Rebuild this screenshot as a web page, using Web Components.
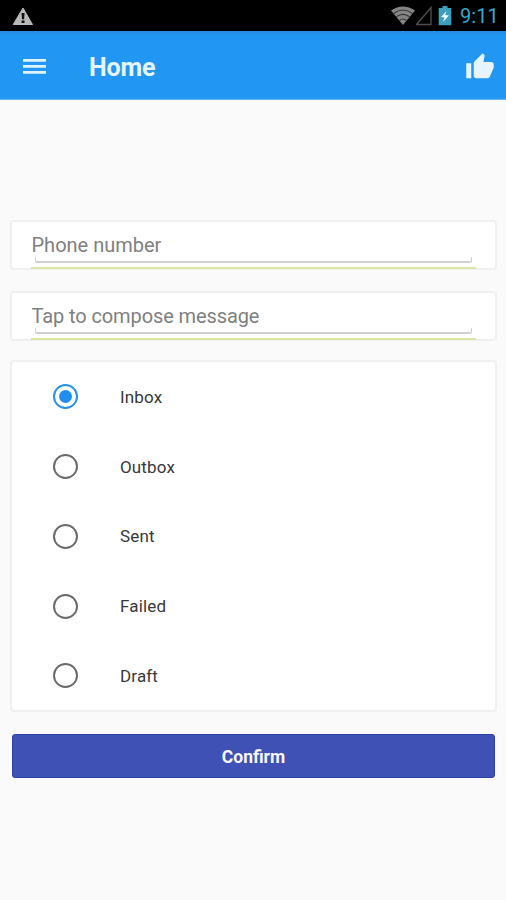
<!DOCTYPE html>
<html lang="en">
<head>
<meta charset="utf-8">
<title>Home</title>
<style>
html,body{margin:0;height:100%;background:#fafafa}
body{font-family:Roboto,"Noto Sans",sans-serif;overflow:hidden}
</style>
</head>
<body>
<message-app></message-app>
<script>
function define(name, html) {
  const template = document.createElement('template');
  template.innerHTML = html;
  customElements.define(name, class extends HTMLElement {
    constructor() {
      super();
      this.attachShadow({ mode: 'open' }).appendChild(template.content.cloneNode(true));
    }
  });
}

define('status-bar', `
<style>
:host{display:flex;height:31px;box-sizing:border-box;background:#000;align-items:center;padding:0 8px 0 12px;color:#33a9cf;font-size:20px;line-height:31px}
svg{display:block;flex:none}
.gap{flex:1}
.time{width:38px;margin-left:7px;letter-spacing:.1px;white-space:nowrap;padding-top:2px}
.wifi{margin-right:1px}
</style>
<svg width="22" height="31" viewBox="0 0 22 31"><path d="M11 8 20.500 24.500H1.200Z" fill="#b9b9b9" stroke="#b9b9b9" stroke-linejoin="round"/><path d="M9.500 13h3.100l-.5 6.200h-2.100zM9.600 20.500h2.900v2.500H9.600z" fill="#111"/></svg>
<span class="gap"></span>
<svg class="wifi" width="26" height="31" viewBox="-1 0 26 31"><path d="M1 10.500Q13 2.500 25 10.500L13 25Z" fill="#858585"/><g fill="none" stroke="#303030" stroke-width="1.100"><path d="M3.500 13.500Q13 6.500 22.500 13.500M6.500 16.800Q13 12 19.500 16.800M9.500 20.500Q13 17.500 16.500 20.500"/></g></svg>
<svg width="17" height="31" viewBox="0 0 17 31"><path d="M.5 24.500 15 7.500V24.500Z" fill="none" stroke="#505050" stroke-width="1.300"/></svg>
<svg width="20" height="31" viewBox="0 0 20 31"><path d="M9.500 6h5v2h3.800v17.300H5.700V8h3.800z" fill="#3b9fbd"/><path d="m13.500 11-5.500 6 3.500.5-1.500 4.500 6-6.500-3.800-.5z" fill="#e8fbff"/></svg>
<span class="time">9:11</span>`);

define('app-bar', `
<style>
:host{display:flex;height:69px;box-sizing:border-box;background:linear-gradient(#258bdf 0,#2196f3 5px,#2196f3 67px,#3b9feb 68px,#8dc8f5 69px);align-items:center;padding:0 11px 0 23px;color:#e7f5ff}
svg{display:block}
.title{flex:1;margin-left:43px;font-size:25px;font-weight:700;line-height:30px;letter-spacing:-.1px;padding-top:4px}
.like{padding-top:2px}
</style>
<svg width="23" height="18" viewBox="0 0 23 18"><path d="M0 2.500h23M0 8.500h23M0 14.500h23" transform="translate(0 .9)" stroke="#dff3ff" stroke-width="2.900"/></svg>
<span class="title"><slot></slot></span>
<svg class="like" width="30" height="30" viewBox="0 0 24 24"><path fill="#e6f4ff" d="M1 21h4V9H1v12zm22-11c0-1.100-.9-2-2-2h-6.310l.95-4.570.03-.32c0-.41-.17-.79-.44-1.060L14.170 1 7.590 7.590C7.220 7.950 7 8.450 7 9v10c0 1.100.9 2 2 2h9c.83 0 1.540-.5 1.840-1.220l3.020-7.050c.09-.23.14-.47.14-.73v-2z"/></svg>`);

define('surface-card', `
<style>
:host{display:block;box-sizing:border-box;background:#fff;border:2px solid #f0f0f0;border-radius:4px}
</style><slot></slot>`);

define('text-field', `
<style>
:host{display:flex;flex-direction:column;height:48px;margin:0 19px 0 19px;color:#808080;font-size:20px;line-height:24px}
.hint{height:37px;padding:11px 0 0 .5px;box-sizing:border-box;white-space:nowrap;letter-spacing:var(--hint-spacing,0)}
.track{height:6px;box-sizing:border-box;margin:-2px 4px 0;border:solid #d0d0d0;border-width:0 1px 2px;border-radius:0 0 2px 2px}
.line{height:2px;background:#dbe6a0;margin-top:4px;flex:none}
</style>
<div class="hint"><slot></slot></div><div class="track"></div><div class="line"></div>`);

define('radio-option', `
<style>
:host{display:flex;align-items:center;height:69.750px;padding-left:41px;color:#383838;font-size:17px;line-height:22px;letter-spacing:.15px}
.ring{width:25px;height:25px;box-sizing:border-box;border:2px solid #6b6b6b;border-radius:50%;margin-right:42px;display:grid;place-items:center;flex:none}
:host([checked]) .ring{border-color:#2492ee}
:host([checked]) .ring::after{content:"";width:13px;height:13px;border-radius:50%;background:#1f8eec}
</style>
<span class="ring"></span><span class="label"><slot></slot></span>`);

define('confirm-button', `
<style>
:host{display:grid;place-items:center;height:44px;box-sizing:border-box;background:#3f51b5;border:1px solid #2b40a7;border-radius:3px;color:#f7f8ff;font-size:17.500px;font-weight:700;line-height:22px}
span{padding-top:2px}
</style><span><slot></slot></span>`);

define('message-app', `
<style>
:host{display:flex;flex-direction:column;width:506px;height:900px;background:#fafafa}
main{display:flex;flex-direction:column;padding:120px 9px 0 10px}
.field{height:50px;margin-bottom:20.500px}
.compose{--hint-spacing:-.1px}
.options{height:352px;margin-bottom:22px;margin-top:-1px}
confirm-button{margin:0 2px}
</style>
<status-bar></status-bar>
<app-bar>Home</app-bar>
<main>
<surface-card class="field"><text-field>Phone number</text-field></surface-card>
<surface-card class="field"><text-field class="compose">Tap to compose message</text-field></surface-card>
<surface-card class="options">
<radio-option checked>Inbox</radio-option><radio-option>Outbox</radio-option><radio-option>Sent</radio-option><radio-option>Failed</radio-option><radio-option>Draft</radio-option>
</surface-card>
<confirm-button>Confirm</confirm-button>
</main>`);
</script>
</body>
</html>
